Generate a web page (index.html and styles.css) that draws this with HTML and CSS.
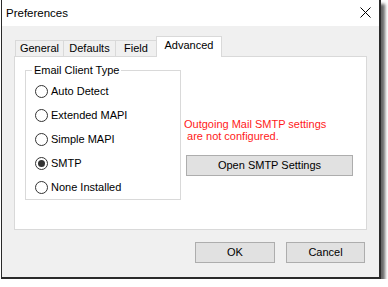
FILE: index.html
```html
<!DOCTYPE html>
<html>
<head>
<meta charset="utf-8">
<link rel="stylesheet" href="styles.css">
</head>
<body>
<div class="window">
  <div class="titlebar">
    <span class="title">Preferences</span>
    <svg class="close" width="11" height="11" viewBox="0 0 11 11"><path d="M0.5 0.5 L10.5 10.5 M10.5 0.5 L0.5 10.5" stroke="#000" stroke-width="1" fill="none"/></svg>
  </div>
  <div class="content">
    <div class="tabs">
      <div class="tab tab-general">General</div>
      <div class="tab tab-defaults">Defaults</div>
      <div class="tab tab-field">Field</div>
      <div class="tab tab-advanced selected">Advanced</div>
    </div>
    <div class="panel">
      <fieldset class="group">
        <legend class="legend">Email Client Type</legend>
        <div class="radio"><span class="circle"></span>Auto Detect</div>
        <div class="radio"><span class="circle"></span>Extended MAPI</div>
        <div class="radio"><span class="circle"></span>Simple MAPI</div>
        <div class="radio"><span class="circle checked"></span>SMTP</div>
        <div class="radio"><span class="circle"></span>None Installed</div>
      </fieldset>
      <div class="side">
        <div class="warning">Outgoing Mail SMTP settings<br>&nbsp;are not configured.</div>
        <div class="btn btn-smtp">Open SMTP Settings</div>
      </div>
    </div>
    <div class="actions">
      <div class="btn btn-ok">OK</div>
      <div class="btn btn-cancel">Cancel</div>
    </div>
  </div>
</div>
</body>
</html>
```

FILE: styles.css
```css
html, body {
  margin: 0;
  padding: 0;
  background: #ffffff;
}
body {
  font-family: "Liberation Sans", Arial, sans-serif;
  font-size: 11px;
  color: #000;
}
.window {
  box-sizing: border-box;
  margin-left: 1px;
  width: 380px;
  height: 279px;
  background: #f0f0f0;
  border-left: 1px solid #2a2a2a;
  border-right: 2px solid #2a2a2a;
  border-bottom: 2px solid #2a2a2a;
  box-shadow: 4px 4px 3px rgba(0, 0, 0, 0.6);
}
.titlebar {
  height: 26px;
  background: #ffffff;
  display: flex;
  align-items: center;
  justify-content: space-between;
  padding: 0 8px 0 4px;
}
.title {
  font-size: 11.5px;
  margin-top: -1px;
}
.close {
  display: block;
  margin-top: -1px;
}
.content {
  padding: 10px 12px 0 12px;
}
.tabs {
  display: flex;
  align-items: flex-end;
  height: 20px;
  padding-left: 1px;
}
.tab {
  box-sizing: border-box;
  height: 16px;
  border: 1px solid #d9d9d9;
  border-bottom: none;
  background: #f0f0f0;
  text-align: center;
  line-height: 15px;
  margin-left: -1px;
}
.tab-general { width: 49px; margin-left: 0; }
.tab-defaults { width: 53px; }
.tab-field { width: 42px; }
.tab-advanced { width: 66px; }
.tab.selected {
  position: relative;
  z-index: 1;
  height: 21px;
  margin-bottom: -1px;
  background: #ffffff;
  line-height: 16px;
}
.panel {
  box-sizing: border-box;
  height: 174px;
  background: #ffffff;
  border: 1px solid #d9d9d9;
  display: flex;
  align-items: flex-start;
}
.group {
  box-sizing: border-box;
  margin: 7px 0 0 10px;
  padding: 2px 0 0 0;
  width: 156px;
  border: 1px solid #d9d9d9;
  min-width: 0;
}
.legend {
  margin-left: 6px;
  padding: 0 2px;
  line-height: 13px;
}
.radio {
  display: flex;
  align-items: center;
  height: 24px;
  padding-left: 9px;
}
.circle {
  box-sizing: border-box;
  width: 13px;
  height: 13px;
  border: 1px solid #333;
  border-radius: 50%;
  margin-right: 3px;
  display: flex;
  align-items: center;
  justify-content: center;
  flex: none;
}
.circle.checked::after {
  content: "";
  width: 7px;
  height: 7px;
  border-radius: 50%;
  background: #333;
}
.side {
  margin-left: 3px;
  padding-top: 61px;
}
.warning {
  color: #ff1a1a;
  line-height: 12px;
}
.btn {
  box-sizing: border-box;
  height: 21px;
  border: 1px solid #adadad;
  background: #e1e1e1;
  text-align: center;
  line-height: 19px;
}
.btn-smtp {
  margin: 13px 0 0 2px;
  width: 167px;
}
.actions {
  display: flex;
  justify-content: flex-end;
  gap: 11px;
  margin: 12px 2px 0 0;
}
.btn-ok { width: 80px; }
.btn-cancel { width: 79px; }
```
